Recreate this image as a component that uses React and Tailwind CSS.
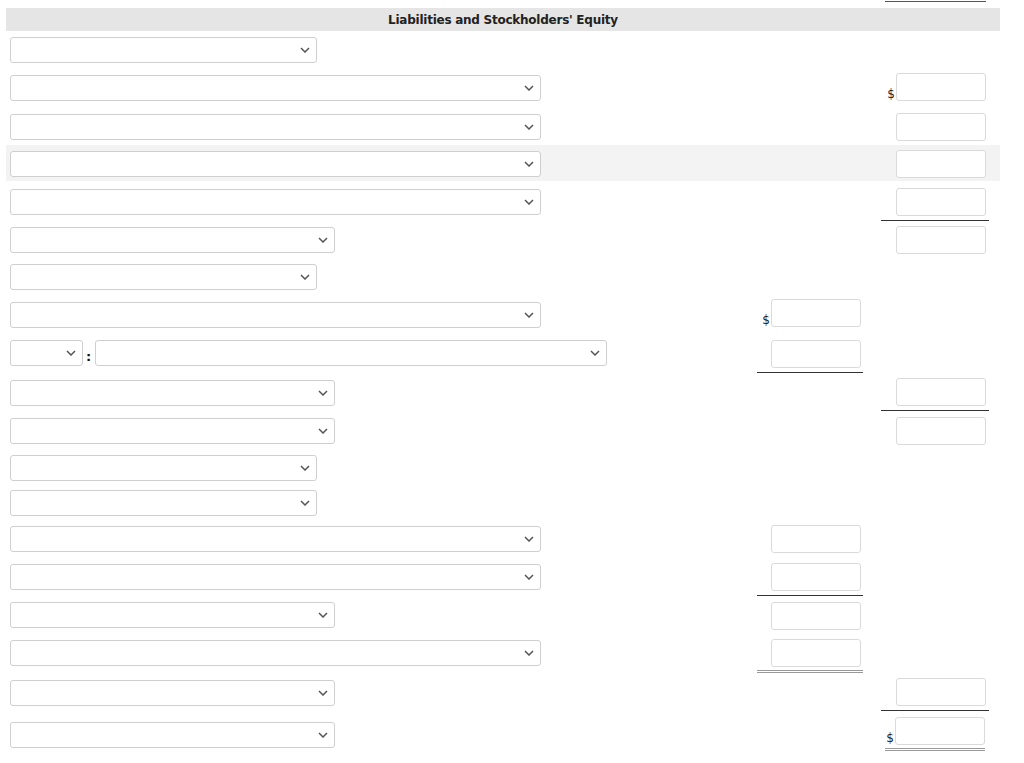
import React from 'react';

const Chevron = () => (
  <svg width="10" height="6" viewBox="0 0 10 6" className="shrink-0">
    <polyline points="1,1 5,5 9,1" fill="none" stroke="#555" strokeWidth="1.5" />
  </svg>
);

const Select = ({ w }) => (
  <div className={`h-[26px] ${w} bg-white border border-[#cfcfcf] rounded-[3px] flex items-center justify-end pr-[6px]`}>
    <Chevron />
  </div>
);

const Box = () => (
  <div className="h-[28px] w-[90px] bg-white border border-[#dadada] rounded-[3px]" />
);

// one amount cell: optional $ sign, optional rule underneath
const Amount = ({ top, dollar, line, pad = 'pr-[3px]' }) => {
  let rule = '';
  if (line === 'single') rule = 'border-b border-[#333] pb-[4px]';
  if (line === 'double') rule = 'border-b-[3px] border-double border-[#999] pb-[3px]';
  if (line === 'total') rule = 'border-b-[3px] border-double border-[#999] pb-[3px] mx-[4px]';
  return (
    <div className={`${top} ${rule}`}>
      <div className={`flex items-end justify-end ${line === 'total' ? '' : pad}`}>
        {dollar && <span className="text-[12px] leading-none mr-[1px] mb-[1px] text-[#222]">$</span>}
        <Box />
      </div>
    </div>
  );
};

const rows = [
  { h: 'h-[38px]', sel: 'pt-[6px]', w: 'w-[307px]' },
  { h: 'h-[38px]', sel: 'pt-[6px]', w: 'w-[531px]', right: { top: 'mt-[4px]', dollar: true } },
  { h: 'h-[38px]', sel: 'pt-[7px]', w: 'w-[531px]', right: { top: 'mt-[6px]' } },
  { h: 'h-[36px]', sel: 'pt-[6px]', w: 'w-[531px]', right: { top: 'mt-[5px]' }, shade: true },
  { h: 'h-[40px]', sel: 'pt-[8px]', w: 'w-[531px]', right: { top: 'mt-[7px]', line: 'single' } },
  { h: 'h-[37px]', sel: 'pt-[6px]', w: 'w-[325px]', right: { top: 'mt-[5px]' } },
  { h: 'h-[38px]', sel: 'pt-[6px]', w: 'w-[307px]' },
  { h: 'h-[38px]', sel: 'pt-[6px]', w: 'w-[531px]', mid: { top: 'mt-[3px]', dollar: true } },
  { h: 'h-[40px]', sel: 'pt-[6px]', split: true, mid: { top: 'mt-[6px]', line: 'single' } },
  { h: 'h-[38px]', sel: 'pt-[6px]', w: 'w-[325px]', right: { top: 'mt-[4px]', line: 'single' } },
  { h: 'h-[37px]', sel: 'pt-[6px]', w: 'w-[325px]', right: { top: 'mt-[5px]' } },
  { h: 'h-[35px]', sel: 'pt-[6px]', w: 'w-[307px]' },
  { h: 'h-[36px]', sel: 'pt-[6px]', w: 'w-[307px]' },
  { h: 'h-[38px]', sel: 'pt-[6px]', w: 'w-[531px]', mid: { top: 'mt-[5px]' } },
  { h: 'h-[38px]', sel: 'pt-[6px]', w: 'w-[531px]', mid: { top: 'mt-[5px]', line: 'single' } },
  { h: 'h-[38px]', sel: 'pt-[6px]', w: 'w-[325px]', mid: { top: 'mt-[6px]' } },
  { h: 'h-[40px]', sel: 'pt-[6px]', w: 'w-[531px]', mid: { top: 'mt-[5px]', line: 'double' } },
  { h: 'h-[42px]', sel: 'pt-[6px]', w: 'w-[325px]', right: { top: 'mt-[4px]', line: 'single' } },
  { h: 'h-[40px]', sel: 'pt-[6px]', w: 'w-[325px]', right: { top: 'mt-[1px]', dollar: true, line: 'total' } },
];

export default function App() {
  return (
    <div className="w-[1024px] h-[763px] bg-white text-[#222] font-['DejaVu_Sans',sans-serif] overflow-hidden">
      {/* rule closing the section above */}
      <div className="h-[8px] flex justify-end pr-[38px]">
        <div className="w-[101px] mt-[1px] h-0 border-t border-[#555]" />
      </div>
      <div className="ml-[6px] w-[994px]">
        <div className="h-[23px] bg-[#e5e5e5] flex items-center justify-center">
          <span className="text-[12px] font-bold tracking-[-0.25px]">Liabilities and Stockholders' Equity</span>
        </div>
        {rows.map((r, i) => (
          <div key={i} className={`${r.h} flex items-start ${r.shade ? 'bg-[#f3f3f3]' : ''}`}>
            <div className={`w-[751px] pl-[4px] ${r.sel}`}>
              {r.split ? (
                <div className="flex items-end">
                  <Select w="w-[73px]" />
                  <span className="text-[13px] font-bold leading-none w-[12px] pl-[3px] mb-[3px] text-[#111]">:</span>
                  <Select w="w-[512px]" />
                </div>
              ) : (
                <Select w={r.w} />
              )}
            </div>
            <div className="w-[106px]">{r.mid && <Amount pad="pr-[2px]" {...r.mid} />}</div>
            <div className="w-[18px]" />
            <div className="w-[108px]">{r.right && <Amount {...r.right} />}</div>
          </div>
        ))}
      </div>
    </div>
  );
}
